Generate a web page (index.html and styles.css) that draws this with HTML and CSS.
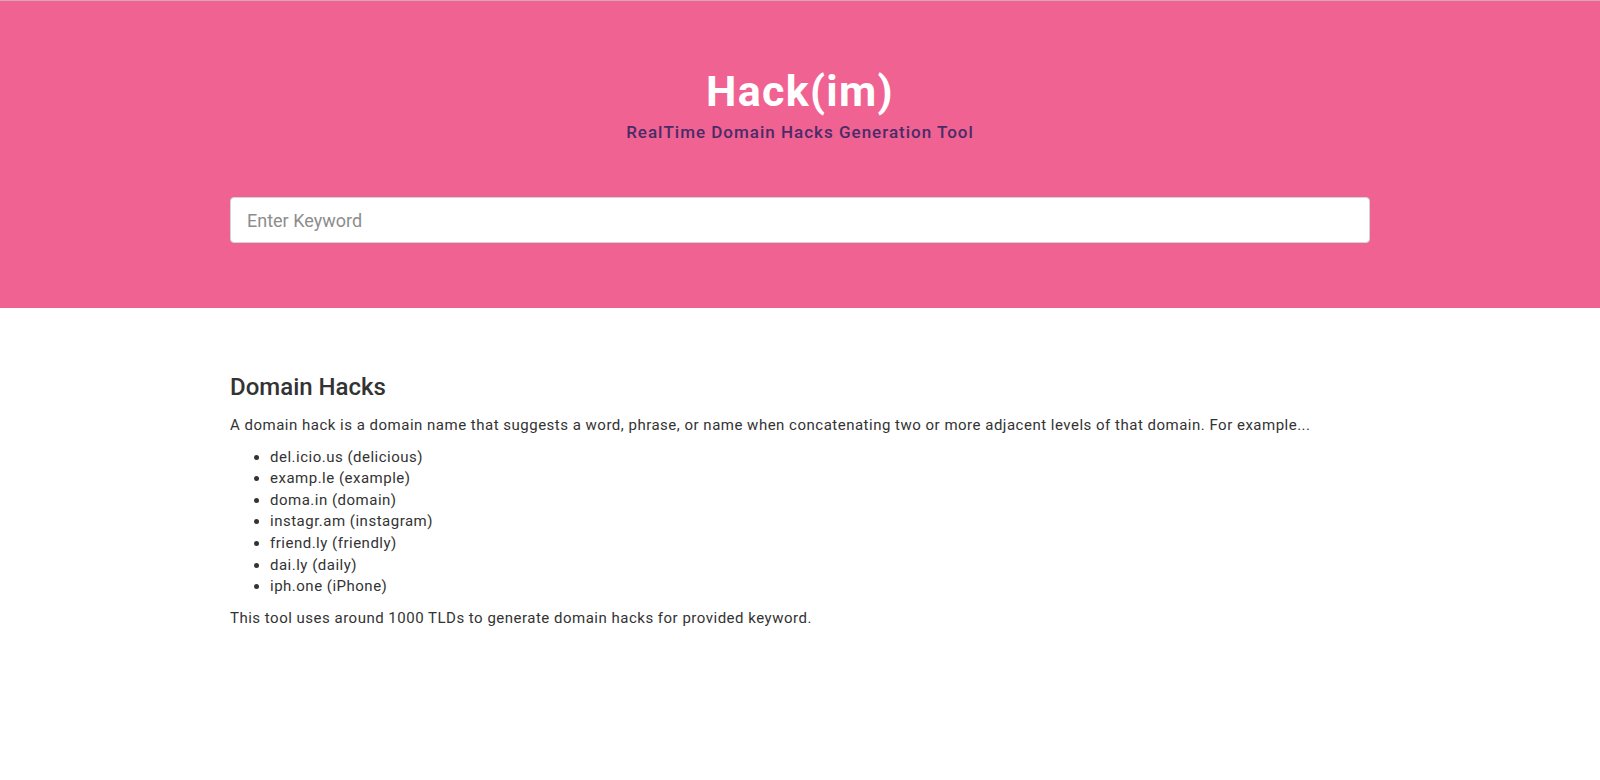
FILE: index.html
```html
<!DOCTYPE html>
<html lang="en">
<head>
    <meta charset="UTF-8">
    <meta name="viewport" content="width=device-width, initial-scale=1.0">
    <title>Hack(im)</title>
    <link rel="stylesheet" href="styles.css">
</head>
<body>
    <header class="hero">
        <div class="container">
            <h1 class="title">Hack(im)</h1>
            <p class="tagline">RealTime Domain Hacks Generation Tool</p>
            <input class="keyword" type="text" placeholder="Enter Keyword">
        </div>
    </header>
    <section class="about">
        <div class="container">
            <h2>Domain Hacks</h2>
            <p>A domain hack is a domain name that suggests a word, phrase, or name when concatenating two or more adjacent levels of that domain. For example...</p>
            <ul>
                <li>del.icio.us (delicious)</li>
                <li>examp.le (example)</li>
                <li>doma.in (domain)</li>
                <li>instagr.am (instagram)</li>
                <li>friend.ly (friendly)</li>
                <li>dai.ly (daily)</li>
                <li>iph.one (iPhone)</li>
            </ul>
            <p>This tool uses around 1000 TLDs to generate domain hacks for provided keyword.</p>
        </div>
    </section>
</body>
</html>
```

FILE: styles.css
```css
*{
    padding: 0;
    margin: 0;
    box-sizing: border-box;
}
body
{
    font-family: Roboto, "Liberation Sans", sans-serif;
    color: #333;
    background: #fff;
}
.container
{
    width: 1140px;
    margin: 0 auto;
}

.hero
{
    background-color: #f06292;
    border-top: 1px solid #dba5b9;
    padding: 64px 0 65px;
    text-align: center;
}
.title
{
    color: #fff;
    font-size: 43px;
    font-weight: 700;
    line-height: 52px;
    letter-spacing: 1.3px;
}
.tagline
{
    color: #4a2b68;
    font-size: 17px;
    font-weight: 500;
    line-height: 26px;
    letter-spacing: 1px;
    margin-top: 2px;
}
.keyword
{
    display: block;
    width: 100%;
    height: 46px;
    margin-top: 52px;
    padding: 0 16px;
    font-family: inherit;
    font-size: 18px;
    color: #495057;
    background: #fff;
    border: 1px solid #ced4da;
    border-radius: 4px;
    outline: none;
}
.keyword::placeholder
{
    color: #8d8d8d;
}

.about
{
    padding-top: 65px;
    font-size: 15px;
    line-height: 21.6px;
    letter-spacing: 0.5px;
}
.about h2
{
    font-size: 24px;
    font-weight: 500;
    line-height: 29px;
    letter-spacing: 0;
    margin-bottom: 13px;
}
.about p
{
    margin-bottom: 10px;
}
.about ul
{
    padding-left: 40px;
    margin-bottom: 10px;
}
```
